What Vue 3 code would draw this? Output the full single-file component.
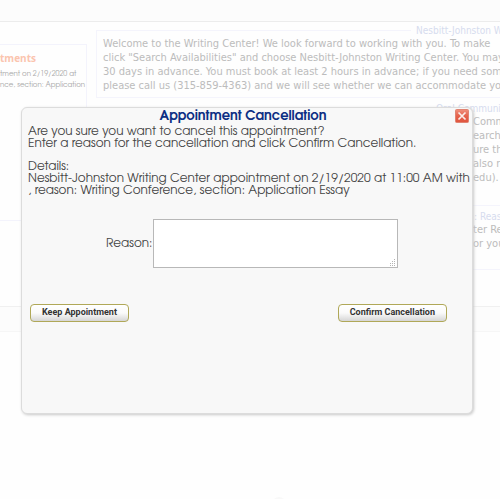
<script setup>
import { ref } from 'vue'

const reason = ref('')

const notices = [
  {
    key: 'welcome',
    title: 'Nesbitt-Johnston Writing Center',
    lines: [
      'Welcome to the Writing Center! We look forward to working with you. To make',
      'click "Search Availabilities" and choose Nesbitt-Johnston Writing Center. You may',
      '30 days in advance. You must book at least 2 hours in advance; if you need some',
      'please call us (315-859-4363) and we will see whether we can accommodate you.',
    ],
  },
  {
    key: 'oral',
    title: 'Oral Communication',
    lines: ['Comm', 'earch', 'ure the', 'also re', 'edu). If'],
  },
  {
    key: 'reasoning',
    title: ': Reasoning',
    lines: ['ter Res', 'or your'],
  },
]
</script>

<template>
  <div class="page">
    <div class="backdrop">
      <header class="topbar"></header>
      <main class="content">
        <aside class="sidebar">
          <h2>tments</h2>
          <p>tment on 2/19/2020 at</p>
          <p>nce, section: Application</p>
        </aside>
        <div class="notices">
          <fieldset v-for="n in notices" :key="n.key" :class="['notice', n.key]">
            <legend>{{ n.title }}</legend>
            <p v-for="line in n.lines" :key="line">{{ line }}</p>
          </fieldset>
        </div>
      </main>
      <footer class="bottombar"></footer>
      <div class="spinner"></div>
    </div>

    <section class="dialog" role="dialog" aria-labelledby="dialog-title">
      <header class="dialog-head">
        <h1 id="dialog-title">Appointment Cancellation</h1>
        <button class="close" type="button" aria-label="Close">
          <svg viewBox="0 0 14 14" width="14" height="14">
            <defs>
              <linearGradient id="red" x1="0" y1="0" x2="0" y2="1">
                <stop offset="0" stop-color="#f0907c" />
                <stop offset="0.5" stop-color="#e5624b" />
                <stop offset="1" stop-color="#e0553f" />
              </linearGradient>
            </defs>
            <rect x="0.5" y="0.5" width="13" height="13" rx="1" fill="url(#red)" stroke="#e08472" />
            <path d="M3.5 3.5L10.500 10.500M10.500 3.500L3.500 10.500" stroke="#fbeeea" stroke-width="1.7" />
          </svg>
        </button>
      </header>
      <p>Are you sure you want to cancel this appointment?</p>
      <p>Enter a reason for the cancellation and click Confirm Cancellation.</p>
      <p class="details">Details:</p>
      <p>Nesbitt-Johnston Writing Center appointment on 2/19/2020 at 11:00 AM with</p>
      <p>, reason: Writing Conference, section: Application Essay</p>
      <div class="field">
        <label for="reason">Reason:</label>
        <div class="box">
          <textarea id="reason" v-model="reason"></textarea>
          <svg class="grip" viewBox="0 0 7 7" width="7" height="7" fill="#b4b4b4">
            <path d="M5 0h1v1h-1zM5 2h1v1h-1zM5 4h1v1h-1zM5 6h1v1h-1zM3 2h1v1h-1zM3 4h1v1h-1zM3 6h1v1h-1zM1 4h1v1h-1zM1 6h1v1h-1z" />
          </svg>
        </div>
      </div>
      <div class="actions">
        <button class="btn" type="button">Keep Appointment</button>
        <button class="btn" type="button">Confirm Cancellation</button>
      </div>
    </section>
  </div>
</template>

<style>
body {
  background: #fefefe;
}
</style>

<style scoped>
.page {
  position: relative;
  height: 100vh;
  overflow: hidden;
}
p,
h1,
h2 {
  margin: 0;
  white-space: nowrap;
}
.backdrop {
  display: flex;
  flex-direction: column;
  height: 100%;
  overflow: hidden;
}
.topbar {
  flex: none;
  height: 21px;
  background: #fcfcfc;
  border-bottom: 1px solid #ececec;
}
.content {
  display: flex;
  flex: none;
  gap: 9px;
  height: 284px;
  border-bottom: 1px solid #f0f0f0;
}
.sidebar {
  box-sizing: border-box;
  flex: none;
  width: 87px;
  height: 177px;
  margin-top: 22px;
  padding-top: 6px;
  border: 1px solid #f3f3fc;
  border-left: 0;
  font: 7px/11px "Century Gothic", "TeX Gyre Adventor", Inter, sans-serif;
  color: #a8a8a8;
}
.sidebar h2 {
  margin-bottom: 4px;
  font: bold 10px/14px "Open Sans", sans-serif;
  color: #fbc4ae;
}
.notices {
  flex: none;
  padding-top: 2px;
  font-family: Tahoma, "DejaVu Sans Condensed", "DejaVu Sans", sans-serif;
}
.notice {
  box-sizing: border-box;
  margin: 0;
  padding: 0 6px 4px;
  border: 1px solid #f4f4fc;
  font-size: 11px;
  line-height: 14px;
  color: #bcbcbc;
}
.notice legend {
  height: 13px;
  margin-left: 308px;
  padding: 0 5px;
  font-size: 10px;
  line-height: 13px;
  color: #d6dcee;
}
.notice.oral,
.notice.reasoning {
  margin-top: 4px;
  padding-left: 376px;
}
.notice.oral {
  padding-bottom: 20px;
}
.notice.oral legend {
  margin-left: -42px;
}
.notice.reasoning {
  padding-bottom: 18px;
}
.notice.reasoning legend {
  margin-left: -4px;
}
.bottombar {
  flex: none;
  height: 24px;
  background: #fcfcfc;
  border-bottom: 1px solid #f6f6f6;
}
.spinner {
  flex: none;
  width: 14px;
  height: 14px;
  margin: auto auto -12px 272px;
  border-radius: 50%;
  background: #f8f8f8;
}
.dialog {
  position: absolute;
  top: 107px;
  left: 21px;
  right: 27px;
  box-sizing: border-box;
  padding: 0 6px 91px;
  border: 1px solid #dcdcdc;
  border-radius: 6px;
  background: #f8f8f8;
  box-shadow: 1px 1px 3px 0 #c8c8c8;
  font: 12px/12px "Century Gothic", "TeX Gyre Adventor", Inter, sans-serif;
  color: #444;
}
.dialog-head {
  position: relative;
  height: 18px;
  text-align: center;
}
.dialog-head h1 {
  padding-right: 8px;
  font-size: 13px;
  line-height: 16px;
  font-weight: 700;
  color: #0d2f84;
}
.close {
  position: absolute;
  top: 1px;
  right: -3px;
  display: flex;
  padding: 0;
  border: 0;
  background: none;
}
.details {
  margin-top: 11px;
}
.field {
  display: flex;
  align-items: center;
  gap: 1px;
  margin-top: 22px;
  padding: 0 68px 0 78px;
}
.box {
  position: relative;
  flex: 1;
  display: flex;
}
.box textarea {
  box-sizing: border-box;
  width: 100%;
  height: 49px;
  border: 1px solid #b8b8b8;
  background: #fff;
  resize: none;
  outline: 0;
}
.grip {
  position: absolute;
  right: 2px;
  bottom: 2px;
}
.actions {
  display: flex;
  justify-content: space-between;
  margin-top: 36px;
  padding: 0 19px 0 2px;
}
.btn {
  height: 18px;
  padding: 0 11px 2px;
  border: 1px solid #b0a858;
  border-radius: 4px;
  background: linear-gradient(#fff, #fafafa 50%, #d6d6d6);
  font: bold 9px/14px Roboto, Arial, sans-serif;
  color: #333;
}
</style>
